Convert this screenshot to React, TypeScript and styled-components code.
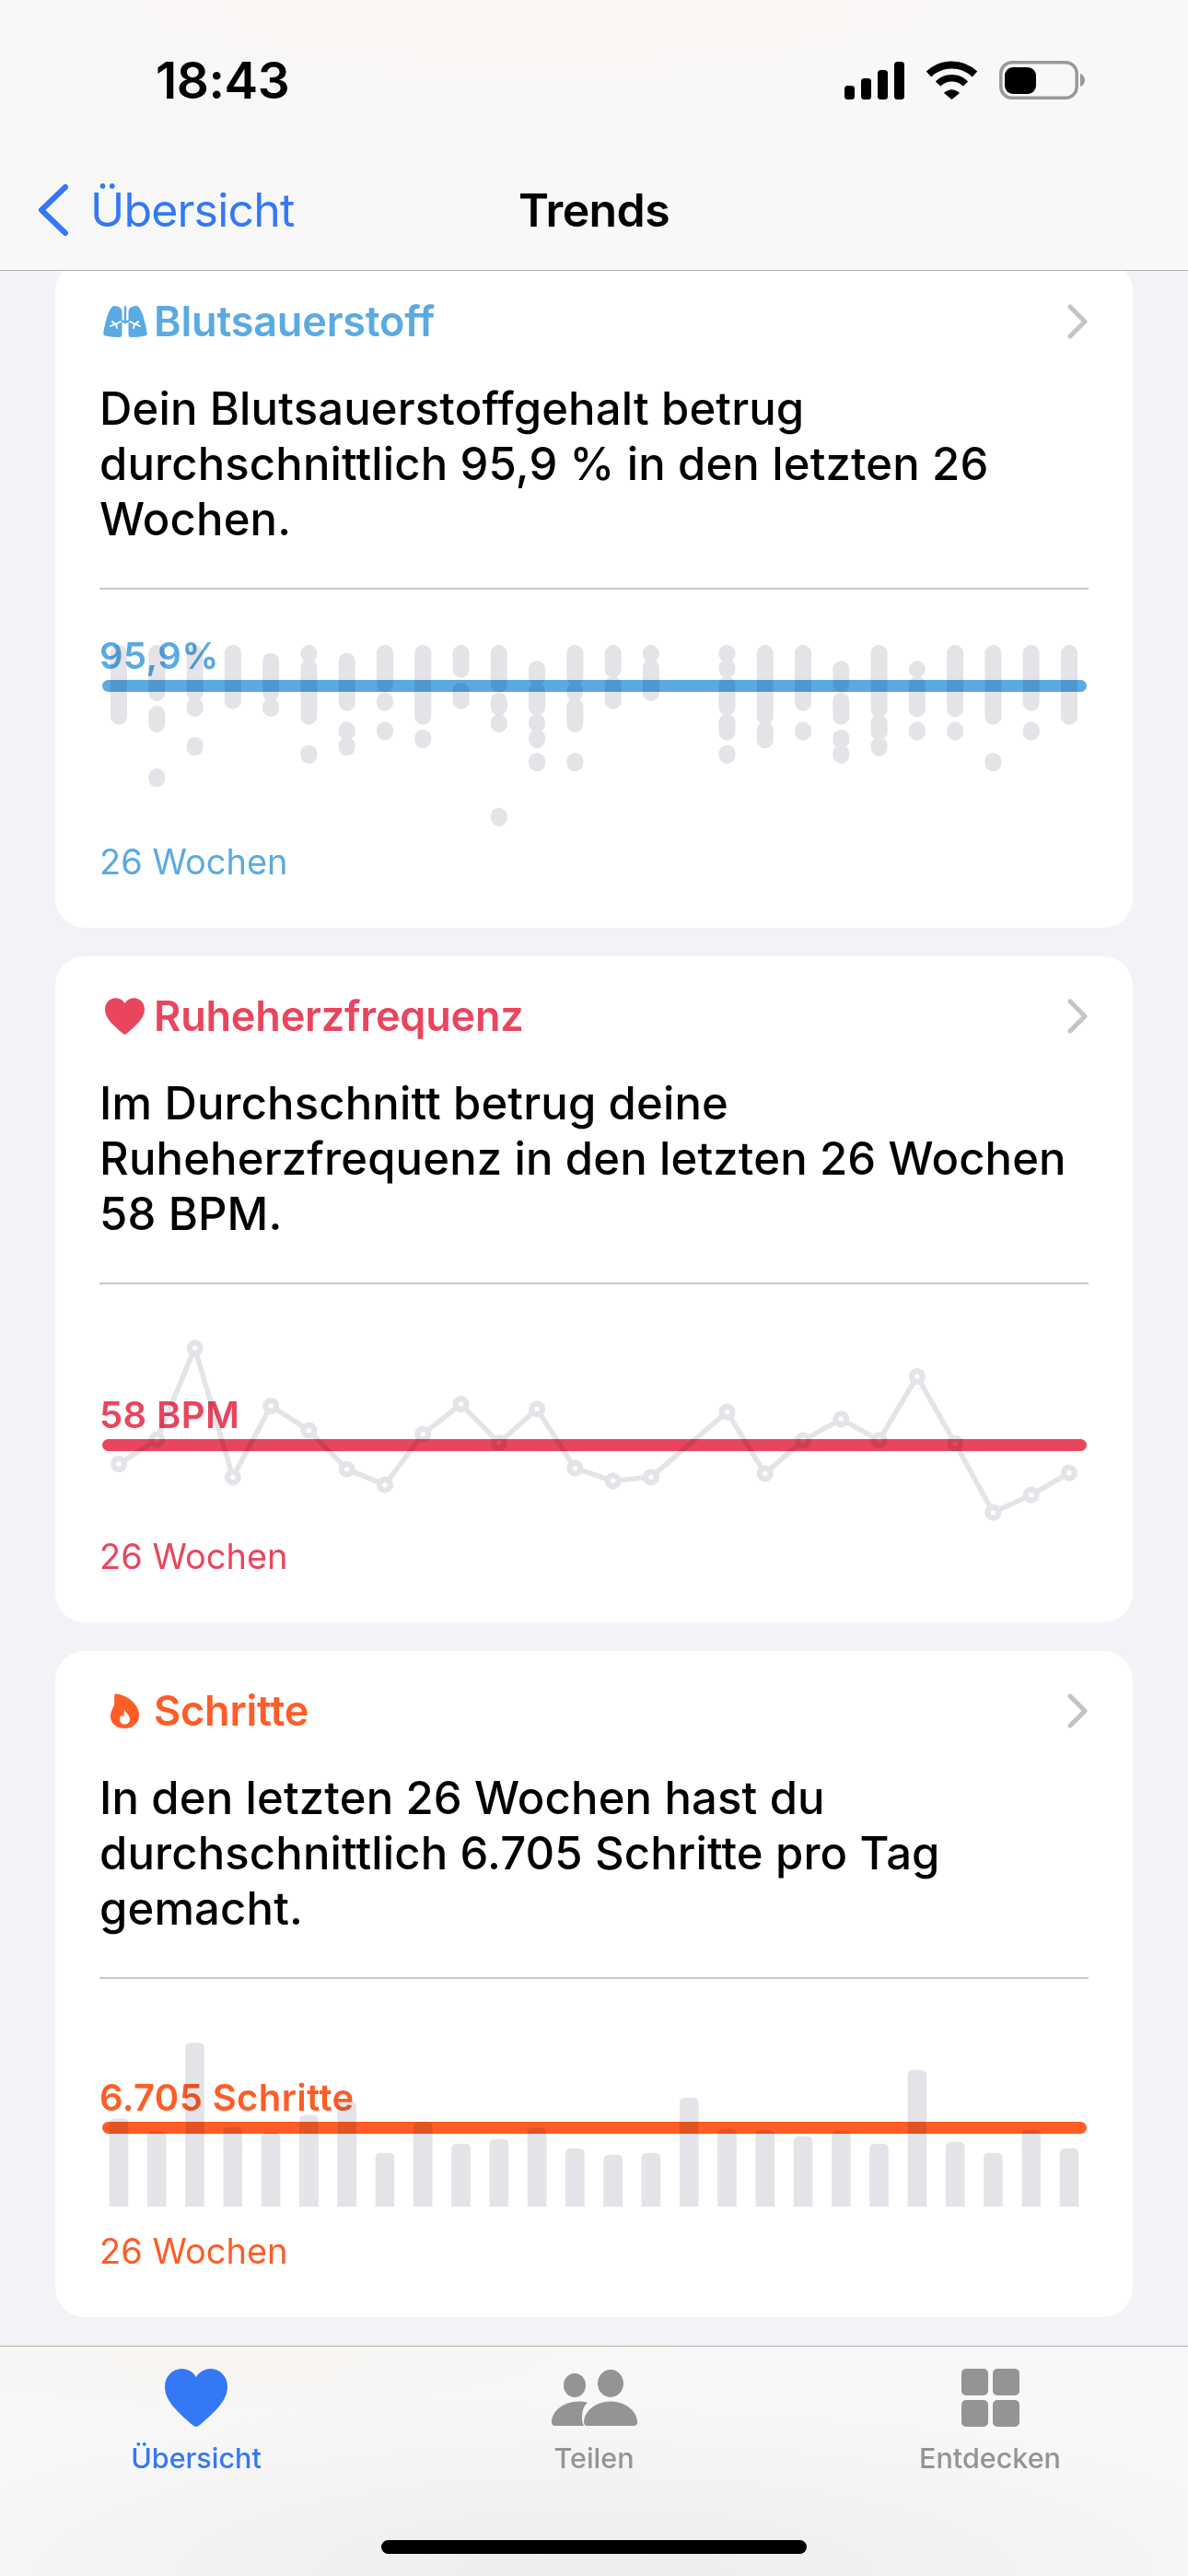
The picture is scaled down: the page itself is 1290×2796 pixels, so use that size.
import React from 'react';
import styled, { createGlobalStyle } from 'styled-components';

const BLUE = '#5aaae3';
const RED = '#ea455e';
const ORANGE = '#ff5c26';
const TINT = '#3478f6';
const MARK = '#e3e3e8';

const GlobalStyle = createGlobalStyle`
  html, body {
    margin: 0;
    padding: 0;
    background: #f2f2f7;
  }
  body {
    font-family: Inter, "Noto Sans", sans-serif;
    color: #000;
  }
`;

const Screen = styled.div`
  width: 1290px;
  height: 2796px;
  display: flex;
  flex-direction: column;
  overflow: hidden;
  background: #f2f2f7;
`;

const Header = styled.header`
  flex: none;
  height: 293px;
  box-sizing: content-box;
  border-bottom: 1.5px solid #b2b2b2;
  display: flex;
  flex-direction: column;
  position: relative;
  z-index: 1;
  background: radial-gradient(ellipse 55% 45% at 45% 0%, #fbf6f2, transparent), #f8f8f9;
`;

const StatusBar = styled.div`
  height: 174px;
  display: flex;
  align-items: center;
  justify-content: space-between;
  padding: 0 112px 0 169px;
`;

const Clock = styled.span`
  font-size: 55px;
  font-weight: 600;
  letter-spacing: -0.5px;
  line-height: 1;
`;

const StatusIcons = styled.div`
  display: flex;
  align-items: center;
  gap: 23px;
`;

const NavRow = styled.nav`
  flex: 1;
  display: grid;
  grid-template-columns: 1fr auto 1fr;
  align-items: center;
  padding: 0 41px 12px;
`;

const BackLink = styled.div`
  display: flex;
  align-items: center;
  gap: 24px;
  color: ${TINT};
  font-size: 50px;
  line-height: 60px;
  letter-spacing: -0.8px;
`;

const NavTitle = styled.div`
  font-size: 50px;
  line-height: 60px;
  font-weight: 600;
  letter-spacing: -0.6px;
`;

const Scroller = styled.main`
  flex: 1;
  min-height: 0;
  overflow: hidden;
  display: flex;
  flex-direction: column;
  gap: 31px;
  padding: 0 60px;
`;

const Card = styled.section`
  flex: none;
  height: 723px;
  box-sizing: border-box;
  padding: 43px 48px 0;
  background: #fff;
  border-radius: 32px;
  &:first-child {
    margin-top: -10px;
  }
`;

const TitleRow = styled.div<{ $color: string }>`
  height: 44px;
  display: flex;
  align-items: center;
  color: ${(p) => p.$color};
`;

const IconSlot = styled.div`
  width: 59px;
  flex: none;
  display: flex;
  justify-content: center;
  padding-right: 4px;
  box-sizing: border-box;
`;

const CardTitle = styled.span`
  flex: 1;
  font-size: 45px;
  font-weight: 600;
  letter-spacing: -0.2px;
  line-height: 44px;
`;

const BodyText = styled.p`
  margin: 43px 0 0;
  font-size: 49px;
  line-height: 60px;
  font-weight: 500;
  letter-spacing: 0.15px;
`;

const Divider = styled.hr`
  margin: 44px 0 0;
  border: 0;
  height: 2px;
  background: #c9c9cb;
`;

const ChartArea = styled.div<{ $top: number }>`
  position: relative;
  height: 272px;
  box-sizing: border-box;
  padding-top: ${(p) => p.$top}px;
`;

const ValueLabel = styled.div<{ $color: string }>`
  height: 44px;
  margin-bottom: 4px;
  font-size: 40px;
  line-height: 44px;
  font-weight: 600;
  letter-spacing: 0.4px;
  color: ${(p) => p.$color};
`;

const MeanLine = styled.div<{ $color: string }>`
  height: 13px;
  margin: 0 2px 0 3px;
  border-radius: 7px;
  background: ${(p) => p.$color};
`;

const Overlay = styled.svg`
  position: absolute;
  left: -48px;
  top: 0;
  width: 1170px;
  height: 272px;
  overflow: visible;
  mix-blend-mode: multiply;
`;

const RangeLabel = styled.div<{ $color: string }>`
  font-size: 38px;
  line-height: 46px;
  color: ${(p) => p.$color};
`;

const TabBar = styled.footer`
  flex: none;
  height: 250px;
  box-sizing: border-box;
  border-top: 1.5px solid #b2b2b2;
  position: relative;
  z-index: 1;
  display: flex;
  flex-direction: column;
  background: radial-gradient(ellipse 65% 80% at 50% 100%, #ededee, transparent),
    radial-gradient(ellipse 40% 40% at 20% 0%, #f8f5f2, transparent), #f8f8f8;
`;

const Tabs = styled.div`
  display: grid;
  grid-template-columns: repeat(3, 1fr);
  padding-top: 24px;
`;

const Tab = styled.div<{ $active?: boolean }>`
  display: flex;
  flex-direction: column;
  align-items: center;
  padding-right: ${(p) => (p.$active ? '4px' : '0')};
  color: ${(p) => (p.$active ? TINT : '#949494')};
`;

const TabIcon = styled.div`
  height: 63px;
  display: flex;
  align-items: center;
`;

const TabLabel = styled.span`
  margin-top: 16px;
  font-size: 30.5px;
  line-height: 36px;
  font-weight: 500;
`;

const HomeBar = styled.div`
  width: 462px;
  height: 15px;
  margin: auto auto 24px;
  border-radius: 8px;
  background: #000;
`;

const HEART =
  'M12 22c-.4 0-.8-.2-1.200-.5C5 16.500 0 12.200 0 6.800 0 3 2.900 0 6.500 0 8.800 0 10.800 1.200 12 3.200 13.200 1.200 15.200 0 17.500 0 21.100 0 24 3 24 6.800c0 5.400-5 9.700-10.800 14.700-.4.300-.8.500-1.200.500z';

const columnX = (i: number) => 69 + 41.28 * i;

const Signal = () => (
  <svg width="65" height="41" viewBox="0 0 65 41">
    <rect x="0" y="26" width="11" height="15" rx="3.500" />
    <rect x="18" y="18" width="11" height="23" rx="3.500" />
    <rect x="36" y="9" width="11" height="32" rx="3.500" />
    <rect x="54" y="0" width="11" height="41" rx="3.500" />
  </svg>
);

const Wifi = () => (
  <svg width="57" height="42" viewBox="0 0 57 42" fill="none" stroke="#000">
    <path d="M3.500 14.500a36 36 0 0 1 50 0" strokeWidth="8" />
    <path d="M13.500 25a21 21 0 0 1 30 0" strokeWidth="7.500" />
    <path d="M20 35q8.500-7.500 17 0l-8.500 7z" fill="#000" stroke="none" />
  </svg>
);

const Battery = () => (
  <svg width="93" height="42" viewBox="0 0 93 42">
    <rect x="1.800" y="1.800" width="82.400" height="38.400" rx="12" fill="none" stroke="#999" strokeWidth="3.500" />
    <rect x="6" y="7" width="34" height="29" rx="9" />
    <path d="M88 14c3 1 5 4 5 7s-2 6-5 7z" fill="#999" />
  </svg>
);

const BackChevron = () => (
  <svg width="33" height="56" viewBox="0 0 33 56" fill="none" stroke={TINT} strokeWidth="6" strokeLinecap="round" strokeLinejoin="round">
    <path d="M30 3L4 28l26 25" />
  </svg>
);

const RowChevron = () => (
  <svg width="24" height="38" viewBox="0 0 24 38" fill="none" stroke="#c4c4c6" strokeWidth="5" strokeLinecap="round" strokeLinejoin="round">
    <path d="M4 3l16 16L4 35" />
  </svg>
);

const LungsIcon = () => (
  <svg width="48" height="34" viewBox="0 0 48 34" fill={BLUE}>
    <path d="M11 0c6 0 9.500 2 9.500 7v24c0 2-1 3-3 3-5 0-10-.5-15-1.500C.5 32 0 30.500 .3 29 2 20 5 4 11 0z" />
    <path d="M37 0c-6 0-9.500 2-9.500 7v24c0 2 1 3 3 3 5 0 10-.5 15-1.500 2-.5 2.500-2 2.200-3.500C46 20 43 4 37 0z" />
    <rect x="22.800" y="0" width="2.400" height="19" rx="1.200" />
    <path d="M19 17l-3 1.500-8 3.500M13 20l-3-3M14 20l1 4M29 17l3 1.500 8 3.500M35 20l3-3M34 20l-1 4" fill="none" stroke="#fff" strokeWidth="1.900" strokeLinecap="round" />
    <path d="M20 16l4 2 4-2" fill="none" stroke={BLUE} strokeWidth="2.500" />
  </svg>
);

const HeartIcon = () => (
  <svg width="43" height="40" viewBox="0 0 24 22" fill={RED}>
    <path d={HEART} />
  </svg>
);

const FlameIcon = () => (
  <svg width="31" height="38" viewBox="0 0 31 38">
    <path d="M5 .5C12 1 20 4 25 10c4 4 6 9 6 14 0 8-7 14-15.500 14C7 38 0 33 0 25c0-5 3-9 4-13 1-4-1-8 1-11.500z" fill={ORANGE} />
    <path d="M15 17c1 4 6 6 6 11 0 3.500-2.500 5.500-5.500 5.500-3.500 0-5.500-2.500-5.500-5.500 0-2 1-3 2-4.500 1 1.500 1.500 2 2 1.500 1-2 .5-5 1-8z" fill="#fff" />
  </svg>
);

const TabHeart = () => (
  <svg width="68" height="63" viewBox="0 0 24 22" preserveAspectRatio="none" fill={TINT}>
    <path d={HEART} />
  </svg>
);

const PeopleIcon = () => (
  <svg width="93" height="61" viewBox="0 0 93 61" fill="#949494">
    <ellipse cx="25" cy="17" rx="12" ry="13" />
    <ellipse cx="64" cy="15" rx="14" ry="15" />
    <path d="M35 61H35c-1-2-2-4-2-8 0-9 2-14 6-17-3-1-5-1.500-8-1.500C10 34.500 0 47 0 57c0 2 1 4 4 4z" />
    <path d="M39 61c-2 0-4-1-4-4 0-11 12-22.500 29-22.500S93 46 93 57c0 3-2 4-4 4z" />
  </svg>
);

const GridIcon = () => (
  <svg width="63" height="63" viewBox="0 0 63 63" fill="#949494">
    <rect x="0" y="0" width="29" height="29" rx="5" />
    <rect x="34" y="0" width="29" height="29" rx="5" />
    <rect x="0" y="34" width="29" height="29" rx="5" />
    <rect x="34" y="34" width="29" height="29" rx="5" />
  </svg>
);

// oxygen readings per week: [top, bottom] of each stack
const OXYGEN: number[][][] = [
  [[240, 500]],
  [[240, 423], [438, 525], [642, 703]],
  [[240, 423], [413, 474], [540, 601]],
  [[240, 449]],
  [[266, 423], [413, 474]],
  [[240, 297], [287, 500], [566, 627]],
  [[266, 455], [490, 550], [540, 601]],
  [[240, 395], [395, 455], [490, 550]],
  [[240, 500], [515, 576]],
  [[240, 347], [362, 449]],
  [[240, 395], [395, 470], [465, 525], [770, 831]],
  [[292, 372], [362, 470], [465, 525], [515, 576], [591, 652]],
  [[240, 372], [362, 423], [413, 525], [591, 652]],
  [[240, 347], [342, 449]],
  [[240, 297], [287, 423]],
  [],
  [[240, 297], [287, 347], [342, 470], [465, 551], [566, 627]],
  [[240, 500], [490, 577]],
  [[240, 455], [490, 551]],
  [[292, 395], [395, 500], [515, 577], [566, 627]],
  [[240, 475], [465, 551], [540, 602]],
  [[292, 347], [342, 475], [490, 551]],
  [[240, 475], [490, 551]],
  [[240, 500], [591, 652]],
  [[240, 455], [490, 551]],
  [[240, 500]],
];

const PULSE: (number | null)[] = [
  567, 488, 190, 610, 378, 458, 584, 635, 470, 372, 498, 388, 581, 622, 610, null, 398, 598, 490, 421, 490, 282, 500, 725, 668, 596,
];

const STEPS = [
  358, 400, 112, 386, 404, 347, 302, 470, 368, 440, 425, 388, 455, 476, 470, 290, 392, 395, 416, 398, 440, 200, 434, 470, 395, 455,
];

const RangeChart = () => (
  <Overlay viewBox="0 0 1170 272">
    {OXYGEN.map((stack, i) =>
      stack.map(([top, bottom]) => (
        <rect
          key={`${i}-${top}`}
          x={columnX(i) - 9}
          y={top / 3 - 20}
          width="18"
          height={(bottom - top) / 3}
          rx="9"
          fill={MARK}
        />
      ))
    )}
  </Overlay>
);

const LineChart = () => {
  const points = PULSE.map((v, i) => (v === null ? null : { x: columnX(i), y: v / 3 + 6 })).filter(
    (p): p is { x: number; y: number } => p !== null
  );
  return (
    <Overlay viewBox="0 0 1170 272">
      <polyline
        points={points.map((p) => `${p.x},${p.y}`).join(' ')}
        fill="none"
        stroke={MARK}
        strokeWidth="5.500"
        strokeLinejoin="round"
      />
      {points.map((p) => (
        <circle key={p.x} cx={p.x} cy={p.y} r="5.900" fill="#fff" stroke={MARK} strokeWidth="6.300" />
      ))}
    </Overlay>
  );
};

const BarChart = () => (
  <Overlay viewBox="0 0 1170 272">
    {STEPS.map((v, i) => {
      const y = v / 3 + 32;
      return (
        <path
          key={i}
          d={`M${columnX(i) - 10.3} 247V${y + 6}q0-6 6-6h8.600q6 0 6 6V247z`}
          fill={MARK}
        />
      );
    })}
  </Overlay>
);

interface TrendCardProps {
  color: string;
  icon: React.ReactNode;
  title: string;
  lines: string[];
  value: string;
  meanTop: number;
  chart: React.ReactNode;
}

const TrendCard: React.FC<TrendCardProps> = ({ color, icon, title, lines, value, meanTop, chart }) => (
  <Card>
    <TitleRow $color={color}>
      <IconSlot>{icon}</IconSlot>
      <CardTitle>{title}</CardTitle>
      <RowChevron />
    </TitleRow>
    <BodyText>
      {lines.map((line) => (
        <React.Fragment key={line}>
          {line}
          <br />
        </React.Fragment>
      ))}
    </BodyText>
    <Divider />
    <ChartArea $top={meanTop}>
      <ValueLabel $color={color}>{value}</ValueLabel>
      <MeanLine $color={color} />
      {chart}
    </ChartArea>
    <RangeLabel $color={color}>26 Wochen</RangeLabel>
  </Card>
);

export default function App() {
  return (
    <Screen>
      <GlobalStyle />
      <Header>
        <StatusBar>
          <Clock>18:43</Clock>
          <StatusIcons>
            <Signal />
            <Wifi />
            <Battery />
          </StatusIcons>
        </StatusBar>
        <NavRow>
          <BackLink>
            <BackChevron />
            Übersicht
          </BackLink>
          <NavTitle>Trends</NavTitle>
        </NavRow>
      </Header>
      <Scroller>
        <TrendCard
          color={BLUE}
          icon={<LungsIcon />}
          title="Blutsauerstoff"
          lines={['Dein Blutsauerstoffgehalt betrug', 'durchschnittlich 95,9 % in den letzten 26', 'Wochen.']}
          value="95,9%"
          meanTop={50}
          chart={<RangeChart />}
        />
        <TrendCard
          color={RED}
          icon={<HeartIcon />}
          title="Ruheherzfrequenz"
          lines={['Im Durchschnitt betrug deine', 'Ruheherzfrequenz in den letzten 26 Wochen', '58 BPM.']}
          value="58 BPM"
          meanTop={120}
          chart={<LineChart />}
        />
        <TrendCard
          color={ORANGE}
          icon={<FlameIcon />}
          title="Schritte"
          lines={['In den letzten 26 Wochen hast du', 'durchschnittlich 6.705 Schritte pro Tag', 'gemacht.']}
          value="6.705 Schritte"
          meanTop={107}
          chart={<BarChart />}
        />
      </Scroller>
      <TabBar>
        <Tabs>
          <Tab $active>
            <TabIcon>
              <TabHeart />
            </TabIcon>
            <TabLabel>Übersicht</TabLabel>
          </Tab>
          <Tab>
            <TabIcon>
              <PeopleIcon />
            </TabIcon>
            <TabLabel>Teilen</TabLabel>
          </Tab>
          <Tab>
            <TabIcon>
              <GridIcon />
            </TabIcon>
            <TabLabel>Entdecken</TabLabel>
          </Tab>
        </Tabs>
        <HomeBar />
      </TabBar>
    </Screen>
  );
}
